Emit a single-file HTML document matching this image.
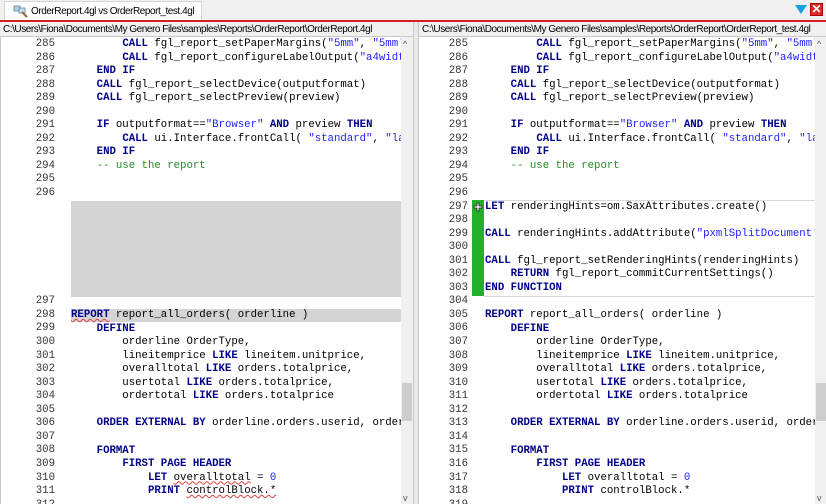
<!DOCTYPE html>
<html><head><meta charset="utf-8"><style>
*{margin:0;padding:0;box-sizing:border-box}
body{width:826px;height:504px;overflow:hidden;background:#f0f0f0;font-family:"Liberation Sans",sans-serif;position:relative}
.tabbar{position:absolute;left:0;top:0;width:826px;height:21px;background:#f0f0f0}
.tab{position:absolute;left:4px;top:1px;width:198px;height:20px;background:#fff;border:1px solid #d6d6d6;border-bottom:none;font-size:10px;letter-spacing:-0.45px;line-height:19px;padding-left:26px;color:#000;white-space:nowrap;overflow:hidden}
.red{position:absolute;left:0;top:20px;width:826px;height:2px;background:#d42020}
.path{position:absolute;top:23px;height:14px;font-size:10px;letter-spacing:-0.45px;line-height:14px;color:#000;background:#f0f0f0;border-bottom:1px solid #c8c8c8;padding-left:3px;white-space:nowrap;overflow:hidden}
.pane{position:absolute;top:37px;height:467px;background:#fff;overflow:hidden}
.code{position:absolute;top:1px;overflow:hidden;height:466px}
.ln{position:absolute;font-family:"Liberation Mono",monospace;font-size:10.7px;height:13.55px;line-height:13.55px;white-space:pre;color:#000}
.num{position:absolute;font-family:"Liberation Mono",monospace;font-size:10.7px;line-height:13.55px;color:#333;text-align:right;width:40px}
k{color:#00008b;font-weight:bold}
s{color:#2020ff;text-decoration:none}
c{color:#2a8a2a}
.sb{position:absolute;top:0;width:12px;height:467px;background:#f0f0f0}
.thumb{position:absolute;left:1px;width:10px;background:#cdcdcd}
.arr{position:absolute;left:2px;font-size:9px;color:#555}
u{text-decoration:underline wavy #e04040;text-decoration-thickness:1px}
</style></head><body>
<div class="tabbar"></div>
<div class="tab"><svg style="position:absolute;left:8px;top:3px" width="16" height="14" viewBox="0 0 16 14"><rect x="1" y="1" width="6" height="5" fill="#bcd" stroke="#58a" stroke-width=".8"/><rect x="6" y="3" width="6" height="5" fill="#cde" stroke="#58a" stroke-width=".8"/><line x1="9" y1="7" x2="14" y2="12" stroke="#963" stroke-width="2"/></svg>OrderReport.4gl vs OrderReport_test.4gl</div>
<svg style="position:absolute;left:795px;top:5px" width="12" height="10"><polygon points="0,0 12,0 6,9" fill="#1aa0e0"/></svg>
<div style="position:absolute;left:810px;top:3px;width:13px;height:13px;background:#e02828;border:1px solid #a00;color:#fff;font-size:12px;line-height:11px;text-align:center;font-weight:bold">✕</div>
<div class="red"></div>

<div class="path" style="left:0;width:413px">C:\Users\Fiona\Documents\My Genero Files\samples\Reports\OrderReport\OrderReport.4gl</div>
<div class="path" style="left:419px;width:407px">C:\Users\Fiona\Documents\My Genero Files\samples\Reports\OrderReport\OrderReport_test.4gl</div>
<div style="position:absolute;left:413px;top:22px;width:6px;height:482px;background:#e8e8e8;border-left:1px solid #c8c8c8;border-right:1px solid #c8c8c8"></div>

<!-- LEFT PANE -->
<div class="pane" style="left:0;width:413px;border-left:1px solid #c8c8c8">
<div style="position:absolute;left:70px;top:164px;width:330px;height:96px;background:#d4d4d4"></div>
<div style="position:absolute;left:70px;top:272px;width:330px;height:13px;background:#d4d4d4"></div>
<div class="code" style="left:0;width:400px">
<div class="num" style="left:14px;top:0">285<br>286<br>287<br>288<br>289<br>290<br>291<br>292<br>293<br>294<br>295<br>296<br><br><br><br><br><br><br><br>297<br>298<br>299<br>300<br>301<br>302<br>303<br>304<br>305<br>306<br>307<br>308<br>309<br>310<br>311<br>312</div>
<div class="ln" style="left:70px;top:0">        <k>CALL</k> fgl_report_setPaperMargins(<s>"5mm"</s>, <s>"5mm'</s></div>
<div class="ln" style="left:70px;top:13.55px">        <k>CALL</k> fgl_report_configureLabelOutput(<s>"a4widt</s></div>
<div class="ln" style="left:70px;top:27.1px">    <k>END IF</k></div>
<div class="ln" style="left:70px;top:40.65px">    <k>CALL</k> fgl_report_selectDevice(outputformat)</div>
<div class="ln" style="left:70px;top:54.2px">    <k>CALL</k> fgl_report_selectPreview(preview)</div>
<div class="ln" style="left:70px;top:81.3px">    <k>IF</k> outputformat==<s>"Browser"</s> <k>AND</k> preview <k>THEN</k></div>
<div class="ln" style="left:70px;top:94.85px">        <k>CALL</k> ui.Interface.frontCall( <s>"standard"</s>, <s>"la</s></div>
<div class="ln" style="left:70px;top:108.4px">    <k>END IF</k></div>
<div class="ln" style="left:70px;top:121.95px">    <c>-- use the report</c></div>
<div class="ln" style="left:70px;top:271.05px"><k><u>REPORT</u></k> report_all_orders( orderline )</div>
<div class="ln" style="left:70px;top:284.6px">    <k>DEFINE</k></div>
<div class="ln" style="left:70px;top:298.15px">        orderline OrderType,</div>
<div class="ln" style="left:70px;top:311.7px">        lineitemprice <k>LIKE</k> lineitem.unitprice,</div>
<div class="ln" style="left:70px;top:325.25px">        overalltotal <k>LIKE</k> orders.totalprice,</div>
<div class="ln" style="left:70px;top:338.8px">        usertotal <k>LIKE</k> orders.totalprice,</div>
<div class="ln" style="left:70px;top:352.35px">        ordertotal <k>LIKE</k> orders.totalprice</div>
<div class="ln" style="left:70px;top:379.45px">    <k>ORDER EXTERNAL BY</k> orderline.orders.userid, order</div>
<div class="ln" style="left:70px;top:406.55px">    <k>FORMAT</k></div>
<div class="ln" style="left:70px;top:420.1px">        <k>FIRST PAGE HEADER</k></div>
<div class="ln" style="left:70px;top:433.65px">            <k>LET</k> <u>overalltotal</u> = <s>0</s></div>
<div class="ln" style="left:70px;top:447.2px">            <k>PRINT</k> <u>controlBlock.*</u></div>
</div>
<div class="sb" style="left:400px"><div class="arr" style="top:2px">^</div><div class="thumb" style="top:346px;height:38px"></div><div class="arr" style="top:456px">v</div></div>
</div>

<!-- RIGHT PANE -->
<div class="pane" style="left:419px;width:407px">
<div style="position:absolute;left:53px;top:163px;width:12px;height:96px;background:#22b02a"></div>
<div style="position:absolute;left:65px;top:163px;width:331px;height:1px;background:#d8d8d8"></div>
<div style="position:absolute;left:65px;top:259px;width:331px;height:1px;background:#d8d8d8"></div>
<svg style="position:absolute;left:54px;top:165px" width="10" height="10"><path d="M4 1h2v3h3v2H6v3H4V6H1V4h3z" fill="#fff" stroke="#222" stroke-width=".8"/></svg>
<div class="code" style="left:0;width:396px">
<div class="num" style="left:9px;top:0">285<br>286<br>287<br>288<br>289<br>290<br>291<br>292<br>293<br>294<br>295<br>296<br>297<br>298<br>299<br>300<br>301<br>302<br>303<br>304<br>305<br>306<br>307<br>308<br>309<br>310<br>311<br>312<br>313<br>314<br>315<br>316<br>317<br>318<br>319</div>
<div class="ln" style="left:66px;top:0">        <k>CALL</k> fgl_report_setPaperMargins(<s>"5mm"</s>, <s>"5mm'</s></div>
<div class="ln" style="left:66px;top:13.55px">        <k>CALL</k> fgl_report_configureLabelOutput(<s>"a4widt</s></div>
<div class="ln" style="left:66px;top:27.1px">    <k>END IF</k></div>
<div class="ln" style="left:66px;top:40.65px">    <k>CALL</k> fgl_report_selectDevice(outputformat)</div>
<div class="ln" style="left:66px;top:54.2px">    <k>CALL</k> fgl_report_selectPreview(preview)</div>
<div class="ln" style="left:66px;top:81.3px">    <k>IF</k> outputformat==<s>"Browser"</s> <k>AND</k> preview <k>THEN</k></div>
<div class="ln" style="left:66px;top:94.85px">        <k>CALL</k> ui.Interface.frontCall( <s>"standard"</s>, <s>"la</s></div>
<div class="ln" style="left:66px;top:108.4px">    <k>END IF</k></div>
<div class="ln" style="left:66px;top:121.95px">    <c>-- use the report</c></div>
<div class="ln" style="left:66px;top:162.6px"><k>LET</k> renderingHints=om.SaxAttributes.create()</div>
<div class="ln" style="left:66px;top:189.7px"><k>CALL</k> renderingHints.addAttribute(<s>"pxmlSplitDocument'</s></div>
<div class="ln" style="left:66px;top:216.8px"><k>CALL</k> fgl_report_setRenderingHints(renderingHints)</div>
<div class="ln" style="left:66px;top:230.35px">    <k>RETURN</k> fgl_report_commitCurrentSettings()</div>
<div class="ln" style="left:66px;top:243.9px"><k>END FUNCTION</k></div>
<div class="ln" style="left:66px;top:271px"><k>REPORT</k> report_all_orders( orderline )</div>
<div class="ln" style="left:66px;top:284.55px">    <k>DEFINE</k></div>
<div class="ln" style="left:66px;top:298.1px">        orderline OrderType,</div>
<div class="ln" style="left:66px;top:311.65px">        lineitemprice <k>LIKE</k> lineitem.unitprice,</div>
<div class="ln" style="left:66px;top:325.2px">        overalltotal <k>LIKE</k> orders.totalprice,</div>
<div class="ln" style="left:66px;top:338.75px">        usertotal <k>LIKE</k> orders.totalprice,</div>
<div class="ln" style="left:66px;top:352.3px">        ordertotal <k>LIKE</k> orders.totalprice</div>
<div class="ln" style="left:66px;top:379.4px">    <k>ORDER EXTERNAL BY</k> orderline.orders.userid, order</div>
<div class="ln" style="left:66px;top:406.5px">    <k>FORMAT</k></div>
<div class="ln" style="left:66px;top:420.05px">        <k>FIRST PAGE HEADER</k></div>
<div class="ln" style="left:66px;top:433.6px">            <k>LET</k> overalltotal = <s>0</s></div>
<div class="ln" style="left:66px;top:447.15px">            <k>PRINT</k> controlBlock.*</div>
</div>
<div class="sb" style="left:396px"><div class="arr" style="top:2px">^</div><div class="thumb" style="top:346px;height:38px"></div><div class="arr" style="top:456px">v</div></div>
</div>
</body></html>
